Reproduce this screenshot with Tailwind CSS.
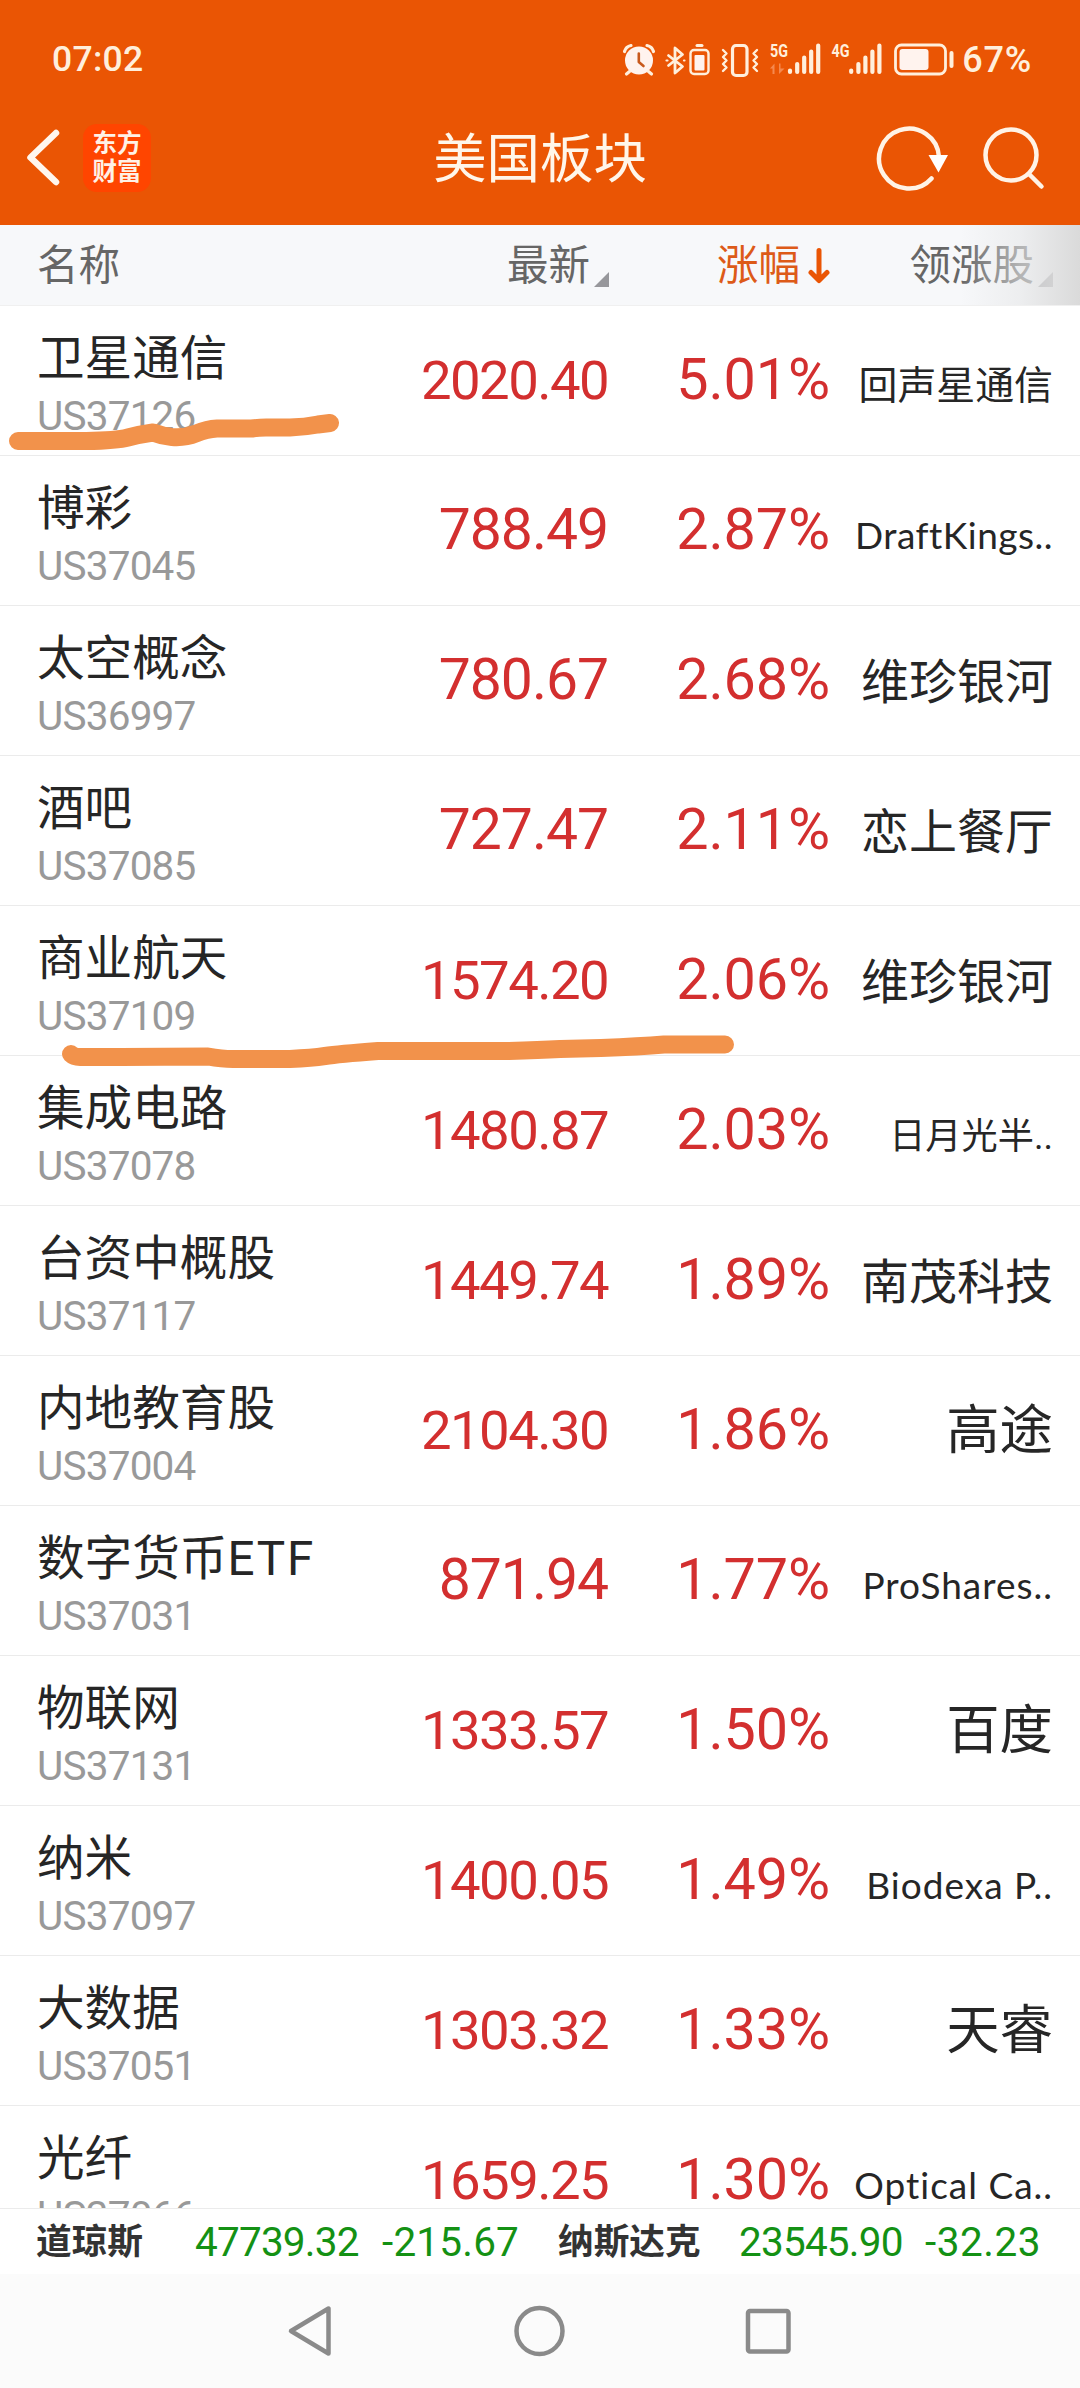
<!DOCTYPE html>
<html lang="zh-CN">
<head>
<meta charset="utf-8">
<title>美国板块</title>
<script src="https://cdn.jsdelivr.net/npm/@tailwindcss/browser@4"></script>
</head>
<body class="bg-white font-['Roboto','Noto_Sans_CJK_SC',sans-serif]">
<div class="relative flex h-[2388px] w-[1080px] flex-col overflow-hidden bg-white">

  <header class="flex h-[225px] shrink-0 flex-col bg-[#ea5504]">
    <!-- system status bar -->
    <div class="flex h-[118px] items-center justify-between pl-[52px] pr-[48px] pt-[2px] text-[35.5px] text-[#ffefdc]">
      <span class="font-medium tracking-[0.3px]">07:02</span>
      <div class="flex items-center gap-[6px]">
        <svg class="h-[40px] w-[334px]" viewBox="622 40 334 40" fill="none" stroke="#ffefdc" stroke-linecap="round" stroke-linejoin="round">
          <!-- alarm clock -->
          <circle cx="639" cy="60.500" r="14" fill="#fff3ee" stroke="none"/>
          <path d="M624.500 51.500q1.500-5 6.500-6M653.500 51.500q-1.500-5-6.500-6M629.500 71.500l-3 2.500M648.500 71.500l3 2.500" stroke-width="3.200"/>
          <path d="M638.800 53.500v8.500l4.700 4" stroke="#c8591c" stroke-width="2.600"/>
          <!-- bluetooth with its battery -->
          <path d="M668.500 55.500l14 11-7.500 6.500v-25l7.500 6.500-14 11" stroke-width="2.800"/>
          <path d="M666.500 60.500h1M684 60.500h.5" stroke-width="2.200"/>
          <path d="M697 45.500h5" stroke-width="3"/>
          <rect x="690.500" y="50" width="18" height="24" rx="3.500" stroke-width="2.400"/>
          <rect x="694.500" y="55" width="10" height="15.500" rx="1" fill="#fff3ee" stroke="none"/>
          <!-- vibrate -->
          <rect x="732.500" y="45.500" width="14.500" height="30" rx="3.500" stroke-width="3.200"/>
          <path d="M723 50l3.500 3.500-3.500 3.500 3.500 3.500-3.500 3.500 3.500 3.500-3.500 3.500M757 50l-3.500 3.500 3.500 3.500-3.500 3.500 3.500 3.500-3.500 3.500 3.500 3.500" stroke-width="2.400"/>
          <!-- mobile signal, two SIMs -->
          <g fill="#ffefdc" stroke="none" font-family="Roboto,sans-serif" font-weight="700" font-size="18">
            <text x="770" y="57" textLength="18" lengthAdjust="spacingAndGlyphs">5G</text>
            <text x="831.500" y="57" textLength="18" lengthAdjust="spacingAndGlyphs">4G</text>
          </g>
          <path d="M770 68.500l4.500-5v10.500h-2v-5.500zM779 63.500h1.500v5h4l-5.500 5.500z" fill="#f5894f" stroke="none"/>
          <g stroke-width="4.200">
            <path d="M790 70.500v1.500M797.200 64v8M804.200 57.500v14.500M811.200 51.500v20.500M818.200 45.500v26.500"/>
            <path d="M851.200 70.500v1.500M858.400 64v8M865.400 57.500v14.500M872.400 51.500v20.500M879.400 45.500v26.500"/>
          </g>
          <!-- main battery -->
          <rect x="895.500" y="45" width="50" height="29" rx="6" stroke-width="2.800"/>
          <rect x="899.500" y="49" width="29" height="21" rx="3" fill="#fff3ee" stroke="none"/>
          <path d="M951.500 53v13" stroke-width="4"/>
        </svg>
        <span class="text-[36px] font-medium tracking-[0.8px]">67%</span>
      </div>
    </div>

    <!-- app title bar -->
    <div class="relative flex h-[80px] items-center justify-center">
      <div class="absolute left-[26px] top-0 flex h-full items-center gap-[23px]">
        <svg class="h-[60px] w-[34px]" viewBox="0 0 34 60" fill="none" stroke="#fff6ee" stroke-width="6.500" stroke-linecap="round" stroke-linejoin="round"><path d="M30 5L4.500 29.500 30 54"/></svg>
        <div class="flex size-[68px] items-center justify-center rounded-[14px] bg-[#ff4500] text-center text-[24.5px] font-bold leading-[28px] text-[#fff1e6]">东方<br>财富</div>
      </div>
      <h1 class="pt-[3px] text-[53.4px] leading-[80px] text-[#fff6ea]">美国板块</h1>
      <div class="absolute right-[34px] top-0 flex h-full items-center gap-[34px]">
        <svg class="h-[70px] w-[74px]" viewBox="875 122 74 70" fill="none" stroke="#fff3e6" stroke-width="4.500" stroke-linecap="round"><path d="M939 156A30 30 0 1 0 931.500 177.500"/><path d="M928.500 154h19.500l-9.500 17.500z" fill="#fff" stroke="none"/></svg>
        <svg class="h-[70px] w-[63px]" viewBox="983 122 63 70" fill="none" stroke="#fff3e6" stroke-width="4.500" stroke-linecap="round"><circle cx="1011" cy="154" r="25.500"/><path d="M1029 173l12.500 12.500"/></svg>
      </div>
    </div>
  </header>

  <!-- column headings -->
  <div class="relative flex h-[81px] shrink-0 items-center border-b border-[#f0f0f0] bg-[#f7f8fa] pl-[37px] pr-[27px] pt-[2px] text-[41.5px] text-[#666]">
    <span class="w-[350px]">名称</span>
    <div class="flex w-[222px] items-center justify-end gap-[4px]">
      <span>最新</span>
      <svg class="mt-[26px] size-[15px]" viewBox="0 0 15 15"><path d="M15 0v15H0z" fill="#97979b"/></svg>
    </div>
    <div class="flex w-[222px] items-center justify-end gap-[7px] text-[#dd5a18]">
      <span>涨幅</span>
      <svg class="h-[38px] w-[24px]" viewBox="0 0 24 38" fill="none" stroke="#ea5504" stroke-width="5" stroke-linecap="round" stroke-linejoin="round"><path d="M12 3.500v29M4 25.500l8 8 8-8"/></svg>
    </div>
    <div class="flex flex-1 items-center justify-end gap-[4px]">
      <span>领涨股</span>
      <svg class="mt-[26px] size-[15px]" viewBox="0 0 15 15"><path d="M15 0v15H0z" fill="#97979b"/></svg>
    </div>
    <div class="absolute right-0 top-0 h-full w-[120px] bg-linear-to-r from-[#f7f8fa]/0 via-[#e6e7e8]/60 to-[#dadada]"></div>
  </div>

  <main id="rows" class="h-[1902px] shrink-0 overflow-hidden"></main>

  <!-- index ticker -->
  <div class="flex h-[66px] shrink-0 items-center whitespace-nowrap border-t border-[#ebebeb] pl-[36px] pt-[2px] text-[40.5px] tracking-[-0.8px] text-[#149114]">
    <span class="w-[159px] text-[35.7px] font-bold tracking-normal text-[#333]">道琼斯</span>
    <span class="w-[187px]">47739.32</span>
    <span class="w-[176px] tracking-[0.2px]">-215.67</span>
    <span class="w-[181px] text-[35.7px] font-bold tracking-normal text-[#333]">纳斯达克</span>
    <span class="w-[186px]">23545.90</span>
    <span class="tracking-[0.5px]">-32.23</span>
  </div>

  <!-- system navigation -->
  <nav class="flex flex-1 items-center justify-center gap-[180px] bg-[#fbfbfb] pr-[3px]">
    <svg class="h-[52px] w-[46px]" viewBox="0 0 46 52" fill="none" stroke="#8a8a8a" stroke-width="4.500" stroke-linejoin="round"><path d="M41.500 3.500v45L4 26z"/></svg>
    <svg class="size-[52px]" viewBox="0 0 52 52" fill="none" stroke="#8a8a8a" stroke-width="4.500"><circle cx="26.500" cy="26" r="23"/></svg>
    <svg class="size-[46px]" viewBox="0 0 46 46" fill="none" stroke="#8a8a8a" stroke-width="4.500"><rect x="3" y="3" width="40.500" height="40.500" rx="2"/></svg>
  </nav>

  <!-- hand-drawn marker underlines -->
  <svg class="pointer-events-none absolute left-0 top-0 h-[1100px] w-[760px]" viewBox="0 0 760 1100" fill="none" stroke="#f2924b" stroke-width="18" stroke-linecap="round" stroke-linejoin="round">
    <path d="M18 441H86Q117 440.500 128 437.500T153 432.500Q162 436 172 437Q185 438 196 433.500T217 428.500H252Q258 427.500 266 427.500H290Q305 427 318 424.500L330 423"/>
    <path d="M71 1054Q74 1057 80 1057H121L208 1056.500Q222 1059 233 1059H290Q312 1058 325 1056T378 1051H509Q540 1050 560 1049L601 1048Q640 1046.500 664 1044.500H725"/>
  </svg>
</div>
<script>
const data = [
  ['卫星通信','US37126','2020.40','5.01%','回声星通信'],
  ['博彩','US37045','788.49','2.87%','DraftKings..'],
  ['太空概念','US36997','780.67','2.68%','维珍银河'],
  ['酒吧','US37085','727.47','2.11%','恋上餐厅'],
  ['商业航天','US37109','1574.20','2.06%','维珍银河'],
  ['集成电路','US37078','1480.87','2.03%','日月光半..'],
  ['台资中概股','US37117','1449.74','1.89%','南茂科技'],
  ['内地教育股','US37004','2104.30','1.86%','高途'],
  ['数字货币<span class="tracking-[1.8px]">ETF</span>','US37031','871.94','1.77%','ProShares..'],
  ['物联网','US37131','1333.57','1.50%','百度'],
  ['纳米','US37097','1400.05','1.49%','Biodexa P..'],
  ['大数据','US37051','1303.32','1.33%','天睿'],
  ['光纤','US37066','1659.25','1.30%','Optical Ca..'],
];
// The leading-stock name shrinks so that longer names stay on one line.
const leadSize = s => /[A-Za-z]/.test(s)
  ? "text-[37px] font-['Lato','Noto_Sans_CJK_SC',sans-serif] " + (s.startsWith('Draft') ? 'tracking-[0.5px]' : 'tracking-[1px]')
  : s.length === 6 ? 'text-[36.2px]' : s.length === 5 ? 'text-[38.9px]' : s.length === 4 ? 'text-[48px]' : 'text-[53.4px]';
document.getElementById('rows').innerHTML = data.map(([n,c,p,r,l]) => `
  <div class="flex h-[150px] items-baseline border-b border-[#ebebeb] pl-[37px] pr-[27px]">
    <div class="flex h-[149px] w-[350px] flex-col self-start pt-[20px]">
      <span class="text-[47.6px] leading-[66px] text-[#262626]">${n}</span>
      <span class="text-[40.5px] leading-[48px] tracking-[-0.8px] text-[#999]">${c}</span>
    </div>
    <span class="w-[221px] text-right leading-[147px] text-[#d32f2f] ${p.length === 7 ? 'text-[54.5px] tracking-[-1.6px]' : 'text-[57px] tracking-[-1px]'}">${p}</span>
    <span class="w-[222px] text-right text-[57.5px] leading-[147px] tracking-[-0.1px] text-[#d32f2f]">${r}</span>
    <span class="flex-1 whitespace-nowrap text-right text-[#262626] leading-[60px] ${leadSize(l)}">${l}</span>
  </div>`).join('');
</script>
</body>
</html>
